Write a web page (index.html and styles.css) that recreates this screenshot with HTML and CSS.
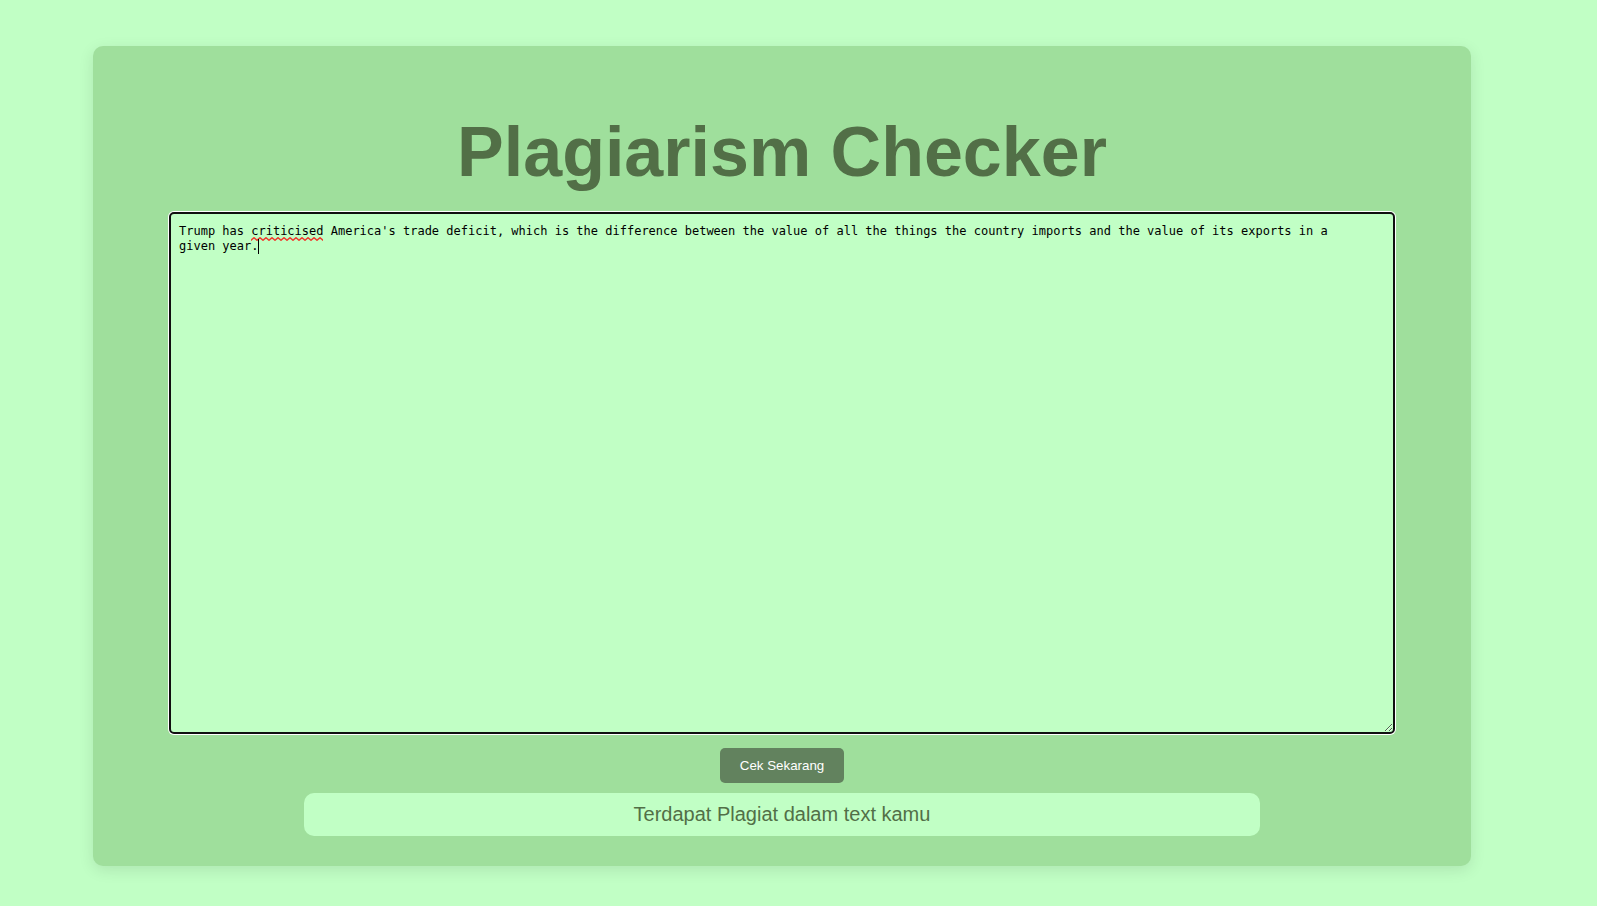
FILE: index.html
```html
<!DOCTYPE html>
<html lang="id">
<head>
  <meta charset="utf-8">
  <meta name="viewport" content="width=device-width, initial-scale=1">
  <title>Plagiarism Checker</title>
  <link rel="stylesheet" href="styles.css">
</head>
<body>
  <main class="card">
    <h1 class="title">Plagiarism Checker</h1>
    <div class="editor">
      <textarea class="editor-input" aria-label="Text" spellcheck="false">Trump has criticised America's trade deficit, which is the difference between the value of all the things the country imports and the value of its exports in a given year.</textarea>
      <svg class="spelling-mark" aria-hidden="true">
        <defs>
          <pattern id="wave" width="6" height="4" patternUnits="userSpaceOnUse">
            <path d="M-1 2.7 L0 3.3 L3 .7 L6 3.3 L7 2.7" fill="none" stroke="#f03a2e" stroke-width="1.4"/>
          </pattern>
        </defs>
        <rect width="100%" height="4" fill="url(#wave)"/>
      </svg>
      <span class="caret" aria-hidden="true"></span>
    </div>
    <button class="check-button" type="button">Cek Sekarang</button>
    <p class="result" role="status">Terdapat Plagiat dalam text kamu</p>
  </main>
</body>
</html>
```
FILE: styles.css
```css
* {
  box-sizing: border-box;
}

body {
  margin: 0;
  padding: 46px 126px 40px 93px;
  background: #c1ffc5;
  font-family: Arial, "Liberation Sans", sans-serif;
  color: #526f47;
}

.card {
  display: flex;
  flex-direction: column;
  align-items: center;
  padding: 66px 76px 30px;
  border-radius: 10px;
  background: #9fdf9c;
  box-shadow: 0 4px 15px rgba(0, 0, 0, 0.1);
}

.title {
  margin: 0 0 20px;
  font-size: 70px;
  line-height: 80px;
  font-weight: bold;
  text-align: center;
}

.editor {
  position: relative;
  width: 100%;
  font-family: "DejaVu Sans Mono", monospace;
  font-size: 12px;
  line-height: 15px;
}

.editor-input {
  display: block;
  width: 100%;
  height: 522px;
  padding: 10px 40px 10px 8px;
  border: 2px solid #101010;
  border-radius: 5px;
  outline: none;
  box-shadow: 0 0 0 1px #fff;
  background: #c1ffc5;
  color: #000;
  font: inherit;
  resize: vertical;
}

.spelling-mark {
  position: absolute;
  top: 25px;
  left: calc(10px + 10ch);
  width: 10ch;
  height: 4px;
}

.caret {
  position: absolute;
  top: 27px;
  left: calc(10px + 11ch);
  width: 1px;
  height: 15px;
  background: #000;
}

.check-button {
  margin: 14px 0 10px;
  padding: 10px 20px;
  border: 0;
  border-radius: 5px;
  background: #62825e;
  color: #fff;
  font-family: inherit;
}

.result {
  width: 78%;
  margin: 0;
  padding: 10px;
  border-radius: 10px;
  background: #c1ffc5;
  font-size: 20px;
  line-height: 23px;
  text-align: center;
}
```
